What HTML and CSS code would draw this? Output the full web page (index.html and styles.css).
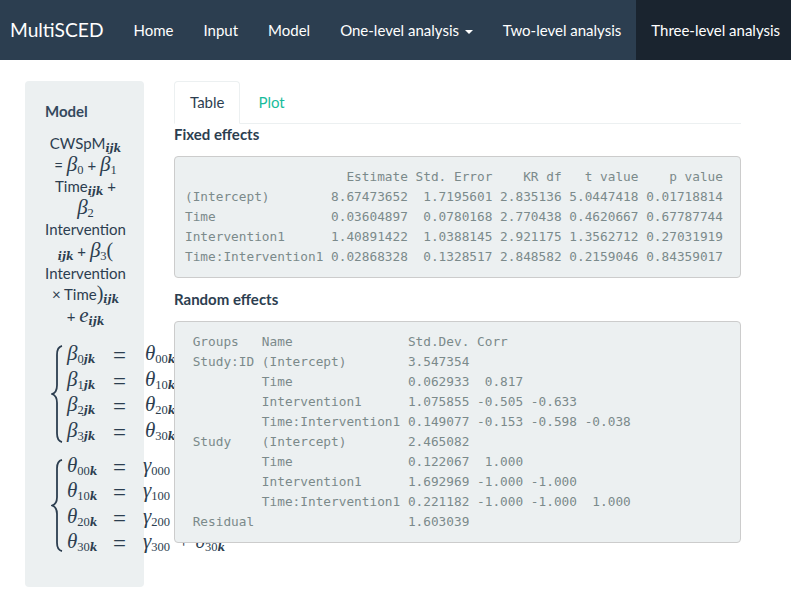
FILE: index.html
```html
<!DOCTYPE html>
<html lang="en">

<head>
  <meta charset="UTF-8">
  <title>MultiSCED</title>
  <link rel="stylesheet" href="styles.css">
</head>

<body>
  <nav class="navbar">
    <a class="brand">MultiSCED</a>
    <ul class="nav">
      <li><a>Home</a></li>
      <li><a>Input</a></li>
      <li><a>Model</a></li>
      <li><a>One-level analysis <span class="caret"></span></a></li>
      <li><a>Two-level analysis</a></li>
      <li class="active"><a>Three-level analysis</a></li>
    </ul>
  </nav>

  <div class="page">
    <aside class="well">
      <h5 class="well-title">Model</h5>
      <p class="equation">
        CWSpM<sub>ijk</sub><br>
        = <i>β</i><sub class="num">0</sub> + <i>β</i><sub class="num">1</sub><br>
        Time<sub>ijk</sub> +<br>
        <i>β</i><sub class="num">2</sub><br>
        Intervention<br>
        <sub>ijk</sub> + <i>β</i><sub class="num">3</sub><span class="paren">(</span><br>
        Intervention<br>
        × Time<span class="paren">)</span><sub>ijk</sub><br>
        + <i>e</i><sub>ijk</sub>
      </p>

      <div class="cases">
        <svg class="brace" viewBox="0 0 12 100" width="12" height="98" preserveAspectRatio="none">
          <path d="M11 1C7 2 6 5 6 10V41C6 46 4 49 1 50C4 51 6 54 6 59V90C6 95 7 98 11 99" fill="none" stroke="#2c3e50" stroke-width="1.8"/>
        </svg>
        <div class="case-grid">
          <span><i>β</i><sub class="num">0</sub><sub>jk</sub></span><span class="eq">=</span><span><i>θ</i><sub class="num">00</sub><sub>k</sub></span>
          <span><i>β</i><sub class="num">1</sub><sub>jk</sub></span><span class="eq">=</span><span><i>θ</i><sub class="num">10</sub><sub>k</sub></span>
          <span><i>β</i><sub class="num">2</sub><sub>jk</sub></span><span class="eq">=</span><span><i>θ</i><sub class="num">20</sub><sub>k</sub></span>
          <span><i>β</i><sub class="num">3</sub><sub>jk</sub></span><span class="eq">=</span><span><i>θ</i><sub class="num">30</sub><sub>k</sub></span>
        </div>
      </div>

      <div class="cases second">
        <svg class="brace" viewBox="0 0 12 100" width="12" height="93" preserveAspectRatio="none">
          <path d="M11 1C7 2 6 5 6 10V41C6 46 4 49 1 50C4 51 6 54 6 59V90C6 95 7 98 11 99" fill="none" stroke="#2c3e50" stroke-width="1.8"/>
        </svg>
        <div class="case-grid">
          <span><i>θ</i><sub class="num">00</sub><sub>k</sub></span><span class="eq">=</span><span><i>γ</i><sub class="num">000</sub></span>
          <span><i>θ</i><sub class="num">10</sub><sub>k</sub></span><span class="eq">=</span><span><i>γ</i><sub class="num">100</sub></span>
          <span><i>θ</i><sub class="num">20</sub><sub>k</sub></span><span class="eq">=</span><span><i>γ</i><sub class="num">200</sub></span>
          <span><i>θ</i><sub class="num">30</sub><sub>k</sub></span><span class="eq">=</span><span><i>γ</i><sub class="num">300</sub><span class="op">+</span><i>υ</i><sub class="num">30</sub><sub>k</sub></span>
        </div>
      </div>
    </aside>

    <main class="main">
      <ul class="tabs">
        <li class="tab active">Table</li>
        <li class="tab">Plot</li>
      </ul>

      <h5 class="section-title">Fixed effects</h5>
      <pre class="output">                     Estimate Std. Error    KR df   t value    p value
(Intercept)        8.67473652  1.7195601 2.835136 5.0447418 0.01718814
Time               0.03604897  0.0780168 2.770438 0.4620667 0.67787744
Intervention1      1.40891422  1.0388145 2.921175 1.3562712 0.27031919
Time:Intervention1 0.02868328  0.1328517 2.848582 0.2159046 0.84359017</pre>

      <h5 class="section-title">Random effects</h5>
      <pre class="output"> Groups   Name               Std.Dev. Corr
 Study:ID (Intercept)        3.547354
          Time               0.062933  0.817
          Intervention1      1.075855 -0.505 -0.633
          Time:Intervention1 0.149077 -0.153 -0.598 -0.038
 Study    (Intercept)        2.465082
          Time               0.122067  1.000
          Intervention1      1.692969 -1.000 -1.000
          Time:Intervention1 0.221182 -1.000 -1.000  1.000
 Residual                    1.603039</pre>
    </main>
  </div>
</body>

</html>
```

FILE: styles.css
```css
* {
  box-sizing: border-box;
}

body {
  margin: 0;
  font-family: "Lato", "Liberation Sans", sans-serif;
  font-size: 15px;
  line-height: 21.4px;
  color: #2c3e50;
  background: #fff;
}

.navbar {
  display: flex;
  height: 60px;
  background: #2c3e50;
  color: #fff;
  overflow: hidden;
}

.brand {
  padding: 20px 15px 20px 10px;
  font-size: 19.2px;
  line-height: 20px;
}

.nav {
  display: flex;
  margin: 0;
  padding: 0;
  list-style: none;
  white-space: nowrap;
}

.nav a {
  display: block;
  padding: 20px 15px;
  line-height: 20px;
}

.nav .active {
  background: #1a242f;
}

.caret {
  display: inline-block;
  margin-left: 2px;
  vertical-align: middle;
  border-top: 4px solid #fff;
  border-left: 4px solid transparent;
  border-right: 4px solid transparent;
}

.page {
  display: grid;
  grid-template-columns: 119px 567px;
  column-gap: 30px;
  padding: 21px 0 0 25px;
  align-items: start;
}

.well {
  height: 506px;
  padding: 18px 20px;
  background: #ecf0f1;
  border-radius: 4px;
  white-space: nowrap;
}

.well-title {
  margin: 0 0 9px;
  font-size: 15px;
  font-weight: 700;
  line-height: 25px;
  color: #34495e;
}

.equation {
  margin: 0 -11px 0 -9px;
  text-align: center;
  line-height: 21.6px;
}

sub {
  font-family: "DejaVu Serif", serif;
  font-size: 11px;
  font-style: italic;
  font-weight: 700;
  line-height: 0;
  vertical-align: -3px;
}

sub.num {
  font-family: "Liberation Serif", serif;
  font-size: 12.5px;
  font-style: normal;
  font-weight: 400;
}

i {
  font-family: "Liberation Serif", serif;
  font-size: 21px;
  line-height: 0;
}

.paren {
  font-family: "Liberation Serif", serif;
  font-size: 20px;
  line-height: 0;
}

.cases {
  display: flex;
  align-items: center;
  gap: 4px;
  width: max-content;
  margin: 16px 0 0 6px;
}

.cases.second {
  margin-top: 10px;
}

.case-grid {
  display: grid;
  grid-template-columns: 46px 32px auto;
  grid-auto-rows: 25.4px;
  line-height: 25.4px;
  font-family: "Liberation Serif", serif;
}

.cases.second .case-grid {
  grid-template-columns: 46px 30px auto;
}

.eq {
  font-size: 23px;
  line-height: 25.4px;
}

.op {
  margin: 0 6px 0 8px;
  font-size: 20px;
  line-height: 0;
}

.main {
  position: relative;
  min-width: 0;
}

.tabs {
  display: flex;
  margin: 0;
  padding: 0;
  list-style: none;
  border-bottom: 1px solid #ecf0f1;
}

.tab {
  height: 43px;
  padding: 10px 15px;
  margin: 0 2px -1px 0;
  line-height: 21.4px;
  color: #18bc9c;
  border: 1px solid transparent;
  border-radius: 4px 4px 0 0;
}

.tab.active {
  color: #2c3e50;
  background: #fff;
  border-color: #ecf0f1 #ecf0f1 #fff;
}

.section-title {
  margin: 0 0 10px;
  height: 22px;
  font-size: 15px;
  font-weight: 700;
  line-height: 21px;
}

.output {
  margin: 0 0 11px;
  padding: 10px;
  font-family: "DejaVu Sans Mono", monospace;
  font-size: 12.77px;
  line-height: 20px;
  color: #7b8a8b;
  background: #ecf0f1;
  border: 1px solid #cccccc;
  border-radius: 4px;
  overflow: hidden;
}
```
